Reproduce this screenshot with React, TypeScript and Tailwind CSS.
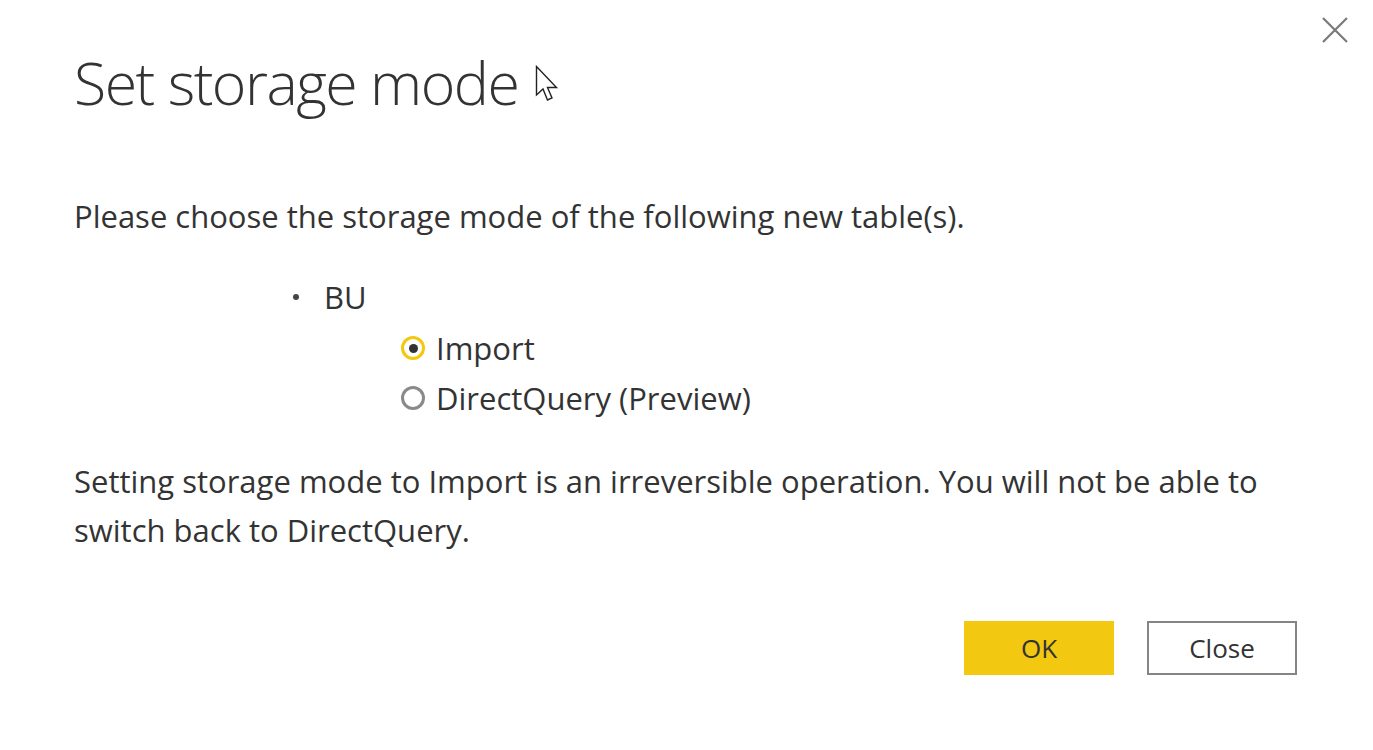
import React from "react";

function CloseIcon() {
    return (
        <svg width="28" height="28" viewBox="0 0 28 28" className="text-[#7a7a7a]">
            <path d="M2 2 L26 26 M26 2 L2 26" stroke="currentColor" strokeWidth="2.2" fill="none" />
        </svg>
    );
}

function Cursor() {
    return (
        <svg width="26" height="40" viewBox="0 0 26 40">
            <path
                d="M1.5 1.5 L1.5 30 L8 24 L12.5 35 L17 33 L12.5 22.5 L21.5 22.5 Z"
                fill="#ffffff"
                stroke="#222222"
                strokeWidth="1.4"
                strokeLinejoin="miter"
            />
        </svg>
    );
}

function Radio({ checked }: { checked: boolean }) {
    return (
        <span
            className={
                checked
                    ? "flex items-center justify-center w-[24px] h-[24px] rounded-full border-[3px] border-[#f2c811] bg-white"
                    : "flex items-center justify-center w-[24px] h-[24px] rounded-full border-[3px] border-[#8a8a8a] bg-white"
            }
        >
            {checked && <span className="w-[9px] h-[9px] rounded-full bg-[#333333]" />}
        </span>
    );
}

export default function App() {
    return (
        <div
            className="relative w-[1373px] h-[750px] bg-white text-[#333333] overflow-hidden"
            style={{ fontFamily: '"Open Sans", "Noto Sans", sans-serif' }}
        >
            <button className="absolute right-[24px] top-[16px]">
                <CloseIcon />
            </button>

            <div className="pl-[74px] pr-[60px]">
                <div className="flex items-center h-[80px] mt-[42px]">
                    <h1 className="text-[59px] font-light leading-none tracking-[-1.5px]">Set storage mode</h1>
                    <span className="ml-[17px] mt-[6px]">
                        <Cursor />
                    </span>
                </div>

                <p className="mt-[74px] text-[31px] leading-[40px]">
                    Please choose the storage mode of the following new table(s).
                </p>

                <ul className="mt-[40px] ml-[219px] text-[31px]">
                    <li className="flex items-center h-[42px]">
                        <span className="w-[31px] flex">
                            <span className="w-[6px] h-[6px] rounded-full bg-[#444444]" />
                        </span>
                        <span>BU</span>
                    </li>
                </ul>

                <div className="ml-[327px] mt-[5px] flex flex-col text-[31px]">
                    <label className="flex items-center gap-[11px] h-[50px]">
                        <Radio checked />
                        <span>Import</span>
                    </label>
                    <label className="flex items-center gap-[11px] h-[50px]">
                        <Radio checked={false} />
                        <span>DirectQuery (Preview)</span>
                    </label>
                </div>

                <p className="mt-[34px] text-[31px] leading-[49px] max-w-[1200px]">
                    Setting storage mode to Import is an irreversible operation. You will not be able to switch back to DirectQuery.
                </p>

                <div className="flex justify-end gap-[33px] mt-[66px] pr-[16px]">
                    <button className="w-[150px] h-[54px] bg-[#f2c811] text-[26px]">OK</button>
                    <button className="w-[150px] h-[54px] border-[2.5px] border-[#858585] bg-white text-[26px]">Close</button>
                </div>
            </div>
        </div>
    );
}
